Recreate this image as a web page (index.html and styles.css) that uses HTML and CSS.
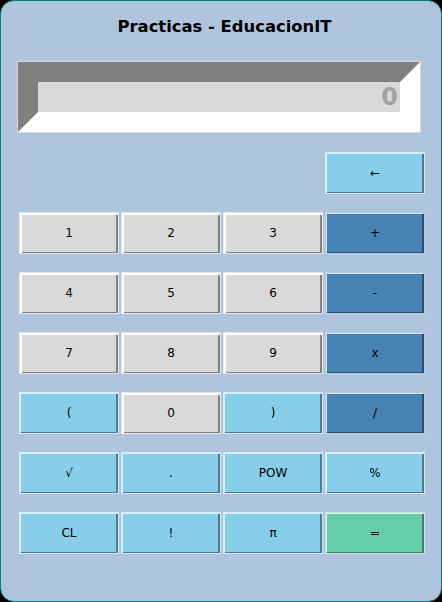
FILE: index.html
```html
<!DOCTYPE html>
<html>
<head>
<meta charset="utf-8">
<link rel="stylesheet" href="styles.css">
</head>
<body>
<div class="window">
  <h1 class="title">Practicas - EducacionIT</h1>
  <div class="display"><div class="screen">0</div></div>
  <div class="keys">
    <button class="key blue c4">←</button>
    <button class="key gray">1</button>
    <button class="key gray">2</button>
    <button class="key gray">3</button>
    <button class="key steel">+</button>
    <button class="key gray">4</button>
    <button class="key gray">5</button>
    <button class="key gray">6</button>
    <button class="key steel">-</button>
    <button class="key gray">7</button>
    <button class="key gray">8</button>
    <button class="key gray">9</button>
    <button class="key steel">x</button>
    <button class="key blue">(</button>
    <button class="key gray">0</button>
    <button class="key blue">)</button>
    <button class="key steel">/</button>
    <button class="key blue">√</button>
    <button class="key blue">.</button>
    <button class="key blue">POW</button>
    <button class="key blue">%</button>
    <button class="key blue">CL</button>
    <button class="key blue">!</button>
    <button class="key blue">π</button>
    <button class="key green">=</button>
  </div>
</div>
</body>
</html>
```
FILE: styles.css
```css
html, body {
  margin: 0;
  padding: 0;
  background: #000;
}
.window {
  width: 440px;
  height: 600px;
  border: 1px solid #008080;
  border-radius: 14px;
  background: #b0c4de;
  font-family: "DejaVu Sans", sans-serif;
  overflow: hidden;
}
.title {
  margin: 16px 0 0 0;
  padding-left: 7px;
  height: 20px;
  line-height: 20px;
  font-size: 16.4px;
  font-weight: bold;
  text-align: center;
  color: #000;
}
.display {
  margin: 24px 0 0 16px;
  width: 402px;
  border: 1px solid #d8d8d8;
}
.screen {
  height: 30px;
  border: 20px solid;
  border-color: #808080 #ffffff #ffffff #808080;
  background: #d9d9d9;
  color: #a3a3a3;
  font-weight: bold;
  font-size: 24px;
  line-height: 30px;
  text-align: right;
  padding-right: 2px;
}
.keys {
  margin: 19px 0 0 18px;
  display: grid;
  grid-template-columns: repeat(4, 100px);
  grid-auto-rows: 42px;
  column-gap: 2px;
  row-gap: 18px;
}
.c4 { grid-column: 4; }
.key {
  margin: 0;
  padding: 0;
  font-family: "DejaVu Sans", sans-serif;
  font-size: 12px;
  color: #000;
  border: 1px solid rgba(255,255,255,0.6);
  box-shadow: inset 1px 1px 0 rgba(255,255,255,0.75), inset -2px -1px 0 rgba(0,0,0,0.4);
}
.gray { background: #d9d9d9; border-color: #e8e8e8; box-shadow: inset 2px 2px 0 #ffffff, inset -2px -1px 0 #808080; }
.blue { background: #87ceeb; }
.steel { background: #4682b4; }
.green { background: #66cdaa; }
```
